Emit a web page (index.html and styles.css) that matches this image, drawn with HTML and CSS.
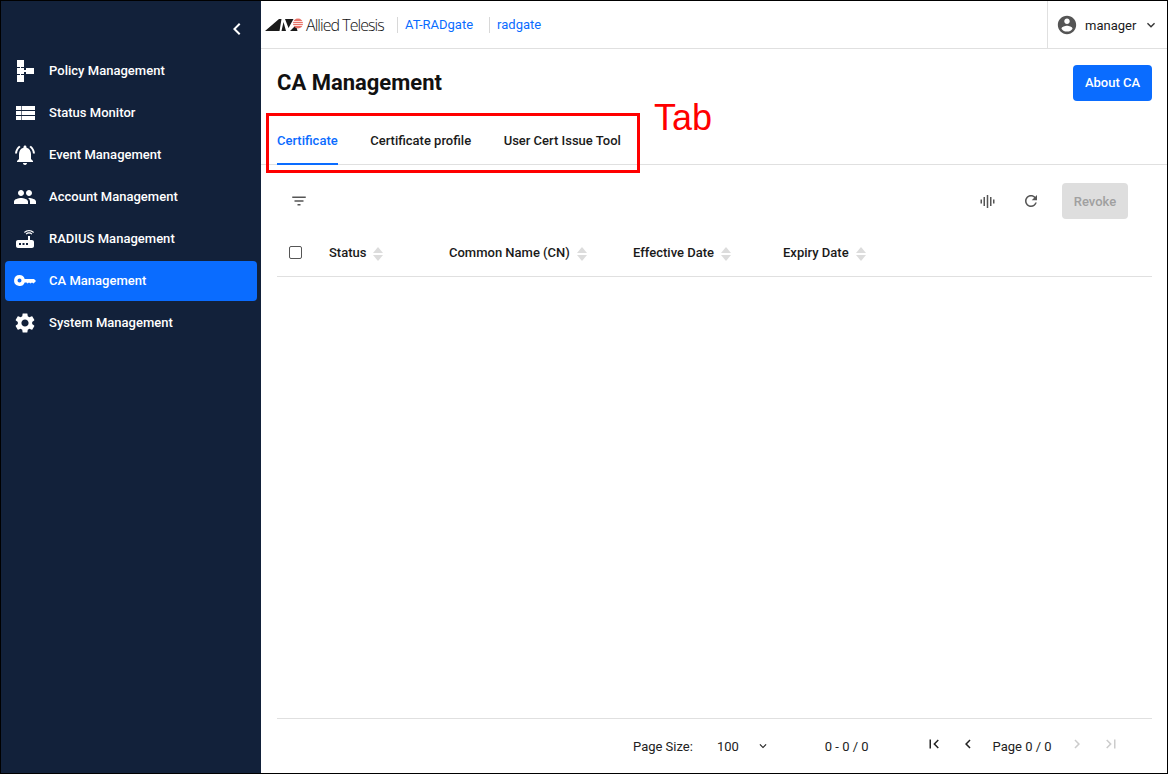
FILE: index.html
```html
<!DOCTYPE html>
<html lang="en">
<head>
    <meta charset="UTF-8">
    <meta name="viewport" content="width=device-width, initial-scale=1.0">
    <title>CA Management</title>
    <link rel="stylesheet" href="styles.css">
</head>
<body>
    <div class="app-frame">
        <!-- Sidebar -->
        <aside class="sidebar">
            <div class="sidebar-top">
                <svg class="icon" viewBox="0 0 24 24"><path d="M15.41 7.41L14 6l-6 6 6 6 1.41-1.41L10.83 12z"/></svg>
            </div>
            <nav class="nav-list">
                <a class="nav-item">
                    <svg class="nav-icon" viewBox="0 0 24 24"><path d="M4 1h7v7H8v1h3v2h2V9h8v6h-8v-2h-2v2H8v1h3v7H4v-7h3v-1H4V9h3V8H4z"/></svg>
                    <span class="nav-label">Policy Management</span>
                </a>
                <a class="nav-item">
                    <svg class="nav-icon" viewBox="0 0 24 24"><path d="M3 5h5v4H3zM8.600 5H22v4H8.600zM3 10h5v4H3zM8.600 10H22v4H8.600zM3 15h5v4H3zM8.600 15H22v4H8.600z"/></svg>
                    <span class="nav-label">Status Monitor</span>
                </a>
                <a class="nav-item">
                    <svg class="nav-icon" viewBox="0 0 24 24"><path d="M7.58 4.08L6.15 2.65C3.75 4.48 2.17 7.3 2.03 10.5h2c.15-2.65 1.51-4.97 3.55-6.42zm12.39 6.42h2c-.15-3.2-1.73-6.02-4.12-7.85l-1.42 1.43c2.02 1.45 3.39 3.77 3.54 6.42zM18 11c0-3.07-1.64-5.64-4.5-6.32V4c0-.83-.67-1.5-1.5-1.5s-1.5.67-1.5 1.5v.68C7.63 5.36 6 7.92 6 11v5l-2 2v1h16v-1l-2-2v-5zm-6 11c.14 0 .27-.01.4-.04.65-.14 1.18-.58 1.44-1.18.1-.24.15-.5.15-.78h-4c.01 1.1.9 2 2.01 2z"/></svg>
                    <span class="nav-label">Event Management</span>
                </a>
                <a class="nav-item">
                    <svg class="nav-icon" viewBox="0 0 24 24"><path d="M16 11c1.66 0 2.99-1.34 2.99-3S17.66 5 16 5c-1.66 0-3 1.34-3 3s1.34 3 3 3zm-8 0c1.66 0 2.99-1.34 2.99-3S9.66 5 8 5C6.34 5 5 6.34 5 8s1.34 3 3 3zm0 2c-2.33 0-7 1.17-7 3.5V19h14v-2.5c0-2.33-4.67-3.5-7-3.5zm8 0c-.29 0-.62.02-.97.05 1.16.84 1.97 1.97 1.97 3.45V19h6v-2.5c0-2.33-4.67-3.5-7-3.5z"/></svg>
                    <span class="nav-label">Account Management</span>
                </a>
                <a class="nav-item">
                    <svg class="nav-icon" viewBox="0 0 24 24"><path d="M20.2 5.9l.8-.8C19.6 3.7 17.8 3 16 3s-3.6.7-5 2.1l.8.8C13 4.8 14.5 4.2 16 4.2s3 .6 4.2 1.7zm-.9.8c-.9-.9-2.1-1.4-3.3-1.4s-2.4.5-3.3 1.4l.8.8c.7-.7 1.6-1 2.5-1 .9 0 1.8.3 2.5 1l.8-.8zM19 13h-2V9h-2v4H5c-1.1 0-2 .9-2 2v4c0 1.1.9 2 2 2h14c1.1 0 2-.9 2-2v-4c0-1.1-.9-2-2-2zM8 18H6v-2h2v2zm3.5 0h-2v-2h2v2zm3.5 0h-2v-2h2v2z"/></svg>
                    <span class="nav-label">RADIUS Management</span>
                </a>
                <a class="nav-item active">
                    <svg class="nav-icon" viewBox="0 0 24 24"><path fill-rule="evenodd" d="M6.500 6a5.500 5.500 0 0 1 5.200 4H21l2 2-2.500 2.500-1.500-1-1.500 1-1.500-1-1.500 1-1-1h-1.800A5.500 5.500 0 1 1 6.500 6zM6.500 9.500a2 2 0 1 0 0 4 2 2 0 0 0 0-4z"/></svg>
                    <span class="nav-label">CA Management</span>
                </a>
                <a class="nav-item">
                    <svg class="nav-icon" viewBox="0 0 24 24"><path d="M19.14 12.94c.04-.3.06-.61.06-.94 0-.32-.02-.64-.07-.94l2.03-1.58c.18-.14.23-.41.12-.61l-1.92-3.32c-.12-.22-.37-.29-.59-.22l-2.39.96c-.5-.38-1.03-.7-1.62-.94l-.36-2.54c-.04-.24-.24-.41-.48-.41h-3.84c-.24 0-.43.17-.47.41l-.36 2.54c-.59.24-1.13.57-1.62.94l-2.39-.96c-.22-.08-.47 0-.59.22L2.74 8.87c-.12.21-.08.47.12.61l2.03 1.58c-.05.3-.09.63-.09.94s.02.64.07.94l-2.03 1.58c-.18.14-.23.41-.12.61l1.92 3.32c.12.22.37.29.59.22l2.39-.96c.5.38 1.03.7 1.62.94l.36 2.54c.05.24.24.41.48.41h3.84c.24 0 .44-.17.47-.41l.36-2.54c.59-.24 1.13-.56 1.62-.94l2.39.96c.22.08.47 0 .59-.22l1.92-3.32c.12-.22.07-.47-.12-.61l-2.01-1.58zM12 15.6c-1.98 0-3.6-1.62-3.6-3.6s1.62-3.6 3.6-3.6 3.6 1.62 3.6 3.6-1.62 3.6-3.6 3.6z"/></svg>
                    <span class="nav-label">System Management</span>
                </a>
            </nav>
        </aside>

        <div class="main">
            <!-- Top bar -->
            <header class="topbar">
                <div class="brand">
                    <svg class="brand-mark" viewBox="0 0 40 14">
                        <path d="M0 13L14 1h2.500l-2 12zM16.500 13l2-9 2.500 9zM20 1h8.500L23.500 10zM25 13l6-6 1.500 6z" fill="#1a1a1a"/>
                        <circle cx="33" cy="5.500" r="5" fill="#e8746a"/>
                        <path d="M28 3.500h10M28 5.500h10M28 7.500h10" stroke="#fff" stroke-width=".8"/>
                    </svg>
                    <span class="brand-name">Allied Telesis</span>
                </div>
                <a class="crumb">AT-RADgate</a>
                <a class="crumb">radgate</a>
                <div class="user-menu">
                    <svg class="user-icon" viewBox="0 0 24 24"><path d="M12 2C6.480 2 2 6.480 2 12s4.480 10 10 10 10-4.480 10-10S17.520 2 12 2zm0 3c1.660 0 3 1.340 3 3s-1.340 3-3 3-3-1.340-3-3 1.340-3 3-3zm0 14.200c-2.500 0-4.710-1.280-6-3.220.030-1.990 4-3.080 6-3.080 1.990 0 5.970 1.090 6 3.080-1.290 1.940-3.500 3.220-6 3.220z"/></svg>
                    <span class="user-name">manager</span>
                    <svg class="caret" viewBox="0 0 24 24"><path d="M16.590 8.590L12 13.170 7.410 8.590 6 10l6 6 6-6z"/></svg>
                </div>
            </header>

            <div class="page-head">
                <h1>CA Management</h1>
                <button class="btn-primary">About CA</button>
            </div>

            <div class="tabs">
                <a class="tab active">Certificate</a>
                <a class="tab">Certificate profile</a>
                <a class="tab">User Cert Issue Tool</a>
            </div>

            <div class="toolbar">
                <svg class="tool-icon" viewBox="0 0 24 24"><path d="M10 18h4v-2h-4v2zM3 6v2h18V6H3zm3 7h12v-2H6v2z"/></svg>
                <div class="toolbar-right">
                    <svg class="wave-icon" viewBox="0 0 15 13"><path d="M.500 4.500H2v4H.500zM3.500 2H5v9H3.500zM6.750 0h1.500v13h-1.500zM10 2h1.500v9H10zM13 4.500h1.500v4H13z"/></svg>
                    <svg class="tool-icon" viewBox="0 0 24 24"><path d="M17.650 6.350C16.200 4.900 14.210 4 12 4c-4.420 0-7.990 3.580-7.990 8s3.570 8 7.990 8c3.730 0 6.840-2.550 7.730-6h-2.080c-.820 2.330-3.040 4-5.650 4-3.310 0-6-2.690-6-6s2.690-6 6-6c1.660 0 3.140.690 4.220 1.780L13 11h7V4l-2.350 2.350z"/></svg>
                    <button class="btn-disabled">Revoke</button>
                </div>
            </div>

            <div class="table-head">
                <span class="check-cell"><span class="checkbox"></span></span>
                <span class="col col-status">Status <i class="sort"></i></span>
                <span class="col col-cn">Common Name (CN) <i class="sort"></i></span>
                <span class="col col-eff">Effective Date <i class="sort"></i></span>
                <span class="col">Expiry Date <i class="sort"></i></span>
            </div>

            <div class="table-body"></div>

            <footer class="pager">
                <span class="pager-label">Page Size:</span>
                <span class="pager-size">100</span>
                <svg class="pager-caret" viewBox="0 0 24 24"><path d="M16.590 8.590L12 13.170 7.410 8.590 6 10l6 6 6-6z"/></svg>
                <span class="pager-range">0 - 0 / 0</span>
                <svg class="pager-btn" viewBox="0 0 24 24"><path d="M18.410 16.590L13.820 12l4.590-4.590L17 6l-6 6 6 6zM6 6h2v12H6z"/></svg>
                <svg class="pager-btn" viewBox="0 0 24 24"><path d="M15.410 7.410L14 6l-6 6 6 6 1.410-1.410L10.830 12z"/></svg>
                <span class="pager-page">Page 0 / 0</span>
                <svg class="pager-btn off" viewBox="0 0 24 24"><path d="M10 6L8.590 7.410 13.170 12l-4.580 4.590L10 18l6-6z"/></svg>
                <svg class="pager-btn off" viewBox="0 0 24 24"><path d="M5.590 7.410L10.180 12l-4.590 4.590L7 18l6-6-6-6zM16 6h2v12h-2z"/></svg>
            </footer>
        </div>

        <!-- Annotation drawn over the screenshot -->
        <div class="note-box"></div>
        <div class="note-label">Tab</div>
    </div>
</body>
</html>
```

FILE: styles.css
```css
:root {
    --navy: #12213a;
    --blue: #0a6cff;
    --line: #e0e0e0;
    --text: #1a1a1a;
}

html, body {
    margin: 0;
    padding: 0;
}

body {
    font-family: Roboto, "Liberation Sans", sans-serif;
    font-size: 13px;
    color: var(--text);
    background: #fff;
}

.app-frame {
    position: relative;
    display: flex;
    width: 1168px;
    height: 774px;
    box-sizing: border-box;
    border: 1px solid #000;
    overflow: hidden;
}

/* Sidebar */
.sidebar {
    width: 260px;
    flex: none;
    background: var(--navy);
    color: #fff;
}

.sidebar-top {
    display: flex;
    justify-content: flex-end;
    align-items: center;
    height: 50px;
    padding: 6px 12px 0 0;
    box-sizing: border-box;
    fill: #fff;
}

.icon {
    width: 24px;
    height: 24px;
}

.nav-list {
    display: flex;
    flex-direction: column;
    gap: 2px;
    padding: 0 4px;
}

.nav-item {
    display: flex;
    align-items: center;
    gap: 12px;
    height: 40px;
    padding-left: 8px;
    border-radius: 4px;
    font-weight: 500;
    letter-spacing: 0.02px;
    color: #fff;
}

.nav-item.active {
    background: var(--blue);
}

.nav-label {
    margin-bottom: 2px;
}

.nav-icon {
    width: 24px;
    height: 24px;
    flex: none;
    fill: #fff;
}

/* Main column */
.main {
    flex: 1;
    min-width: 0;
    display: flex;
    flex-direction: column;
}

.topbar {
    display: flex;
    align-items: center;
    height: 48px;
    flex: none;
    box-sizing: border-box;
    border-bottom: 1px solid var(--line);
    padding-left: 4px;
}

.brand {
    display: flex;
    align-items: center;
    gap: 1px;
    width: 132px;
    flex: none;
}

.brand-mark {
    width: 40px;
    height: 14px;
    flex: none;
}

.brand-name {
    font-family: "Open Sans", sans-serif;
    font-size: 16px;
    font-weight: 300;
    letter-spacing: -0.95px;
    white-space: nowrap;
    color: #111;
}

.crumb {
    color: var(--blue);
    border-left: 1px solid #d8d8d8;
    padding-left: 7px;
    margin-right: 16px;
    line-height: 16px;
}

.user-menu {
    margin-left: auto;
    align-self: stretch;
    display: flex;
    align-items: center;
    width: 120px;
    box-sizing: border-box;
    padding-left: 8px;
    border-left: 1px solid var(--line);
}

.user-icon {
    width: 22px;
    height: 22px;
    fill: #555;
    margin-right: 7px;
}

.user-name {
    padding-top: 2px;
}

.caret {
    width: 16px;
    height: 16px;
    margin-left: 7px;
    fill: #333;
}

.page-head {
    display: flex;
    justify-content: space-between;
    align-items: center;
    padding: 16px 15px 0 16px;
}

h1 {
    margin: 0;
    padding-bottom: 2px;
    font-size: 22px;
    font-weight: 700;
    color: #111;
}

.btn-primary {
    width: 79px;
    height: 36px;
    padding: 0 0 2px;
    border: 0;
    border-radius: 4px;
    background: var(--blue);
    color: #fff;
    font: 500 13px Roboto, sans-serif;
}

.tabs {
    display: flex;
    gap: 32.5px;
    height: 64px;
    box-sizing: border-box;
    padding: 0 16px;
    border-bottom: 1px solid var(--line);
    flex: none;
}

.tab {
    display: flex;
    align-items: center;
    height: 64px;
    box-sizing: border-box;
    padding-top: 16px;
    border-bottom: 2px solid transparent;
    font-weight: 500;
    color: #1a1a1a;
}

.tab.active {
    color: var(--blue);
    border-bottom-color: var(--blue);
}

.toolbar {
    display: flex;
    justify-content: space-between;
    align-items: center;
    height: 36px;
    margin-top: 18px;
    padding: 0 39px 0 29px;
    flex: none;
}

.toolbar-right {
    display: flex;
    align-items: center;
    gap: 25px;
}

.tool-icon {
    width: 18px;
    height: 18px;
    fill: #555;
}

.wave-icon {
    width: 15px;
    height: 13px;
    margin-right: 2.5px;
    fill: #555;
}

.btn-disabled {
    width: 66px;
    height: 36px;
    margin-left: -3px;
    border: 0;
    border-radius: 4px;
    background: #dedede;
    color: #a0a0a0;
    font: 500 13px Roboto, sans-serif;
}

.table-head {
    display: flex;
    align-items: center;
    height: 47px;
    padding-top: 10px;
    margin: 0 15px 0 16px;
    border-bottom: 1px solid var(--line);
    flex: none;
    font-weight: 500;
}

.check-cell {
    width: 52px;
    flex: none;
    display: flex;
    padding-left: 12px;
    box-sizing: border-box;
}

.checkbox {
    width: 11px;
    height: 11px;
    border: 1px solid #555;
    border-radius: 2px;
}

.col {
    display: flex;
    align-items: center;
    gap: 7px;
    white-space: nowrap;
}

.col-status { width: 120px; }
.col-cn { width: 184px; }
.col-eff { width: 150px; }

/* Up and down sort arrows */
.sort {
    display: inline-flex;
    flex-direction: column;
    gap: 2px;
    margin-top: 2px;
}

.sort::before,
.sort::after {
    content: "";
    border-left: 5.5px solid transparent;
    border-right: 5.5px solid transparent;
}

.sort::before {
    border-bottom: 6px solid #dcdcdc;
}

.sort::after {
    border-top: 6px solid #dcdcdc;
}

.table-body {
    flex: 1;
}

.pager {
    display: flex;
    align-items: center;
    height: 54px;
    margin: 0 15px 0 16px;
    padding-left: 356px;
    border-top: 1px solid var(--line);
    flex: none;
    color: #222;
}

.pager-size {
    margin-left: 24px;
}

.pager-caret {
    width: 14px;
    height: 14px;
    margin-left: 17px;
    fill: #222;
}

.pager-range {
    margin-left: 55px;
    margin-right: 48px;
}

.pager-btn {
    width: 18px;
    height: 18px;
    margin: -5px 8px 0;
    fill: #222;
}

.pager-btn.off {
    fill: #ccc;
}

.pager-page {
    margin: 0 8px;
}

/* Red annotation */
.note-box {
    position: absolute;
    left: 265px;
    top: 112px;
    width: 374px;
    height: 60px;
    box-sizing: border-box;
    border: 3px solid #f00;
}

.note-label {
    position: absolute;
    left: 653px;
    top: 97px;
    font-family: "Liberation Sans", sans-serif;
    font-size: 36px;
    line-height: 40px;
    color: #f00;
}
```
